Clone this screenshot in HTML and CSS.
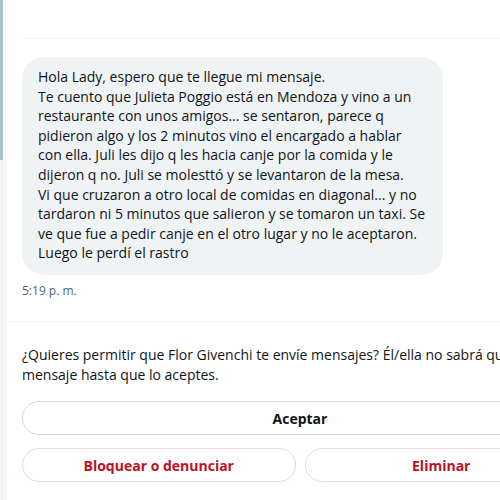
FILE: index.html
```html
<!DOCTYPE html>
<html lang="es">
<head>
  <meta charset="UTF-8">
  <meta name="viewport" content="width=device-width, initial-scale=1.0">
  <title>Solicitud de mensaje</title>
  <link rel="stylesheet" href="styles.css">
</head>
<body>

  <div class="page">
    <!-- strip of the neighbour column -->
    <div class="rail">
      <div class="rail-top"></div>
      <div class="rail-bottom"></div>
    </div>

    <!-- Conversation panel -->
    <div class="panel">
      <div class="panel-head"></div>

      <div class="messages">
        <div class="bubble">
          Hola Lady, espero que te llegue mi mensaje.<br>
          Te cuento que Julieta Poggio está en Mendoza y vino a un<br>
          restaurante con unos amigos... se sentaron, parece q<br>
          pidieron algo y los 2 minutos vino el encargado a hablar<br>
          con ella. Juli les dijo q les hacia canje por la comida y le<br>
          dijeron q no. Juli se molesttó y se levantaron de la mesa.<br>
          Vi que cruzaron a otro local de comidas en diagonal... y no<br>
          tardaron ni 5 minutos que salieron y se tomaron un taxi. Se<br>
          ve que fue a pedir canje en el otro lugar y no le aceptaron.<br>
          Luego le perdí el rastro
        </div>
        <div class="time">5:19 p. m.</div>
      </div>

      <!-- Message request -->
      <div class="request">
        <p class="request-text">
          ¿Quieres permitir que Flor Givenchi te envíe mensajes? Él/ella no sabrá que viste su<br>
          mensaje hasta que lo aceptes.
        </p>
        <button class="btn btn-accept">Aceptar</button>
        <div class="btn-row">
          <button class="btn btn-danger">Bloquear o denunciar</button>
          <button class="btn btn-danger">Eliminar</button>
        </div>
      </div>
    </div>
  </div>

</body>
</html>
```

FILE: styles.css
```css
body {
  margin: 0;
  padding: 0;
  background-color: #fff;
  font-family: "Open Sans", "Noto Sans", Arial, sans-serif;
  color: #0f1419;
  overflow: hidden;
}
.page {
  display: flex;
  min-height: 500px;
  width: 600px;
}
.rail {
  width: 5px;
  display: flex;
  flex-direction: column;
}
.rail-top {
  height: 160px;
  background: linear-gradient(to right, #aec3c7 0, #aec3c7 3px, #fff 3px);
}
.rail-bottom {
  flex: 1;
  background: linear-gradient(to right, #eef4f7 0, #eef4f7 4px, #fff 4px);
}
.panel {
  flex: 1;
  border-left: 1px solid #eef1f2;
}
.panel-head {
  height: 38px;
  margin-left: 16px;
  border-bottom: 1px solid #eff3f4;
}
.messages {
  padding: 18px 16px 0;
  border-bottom: 1px solid #eff3f4;
  height: 264px;
}
.bubble {
  width: 389px;
  padding: 10px 16px 12px;
  background-color: #eff3f4;
  border-radius: 22px;
  font-size: 14px;
  line-height: 19.6px;
  white-space: nowrap;
}
.time {
  margin-top: 8px;
  font-size: 12px;
  line-height: 16px;
  color: #536471;
}
.request {
  padding: 23px 16px;
  width: 556px;
}
.request-text {
  margin: 0 0 17px;
  font-size: 14px;
  line-height: 19.6px;
  white-space: nowrap;
}
.btn {
  display: block;
  width: 100%;
  height: 34px;
  background-color: #fff;
  border: 1px solid #cfd9de;
  border-radius: 17px;
  font-family: "Open Sans", "Noto Sans", Arial, sans-serif;
  font-size: 14px;
  font-weight: bold;
  color: #0f1419;
  cursor: pointer;
}
.btn-row {
  display: flex;
  gap: 9px;
  margin-top: 13px;
}
.btn-danger {
  flex: 1;
  color: #c00f1c;
  border-color: #f3d6d8;
}
```
